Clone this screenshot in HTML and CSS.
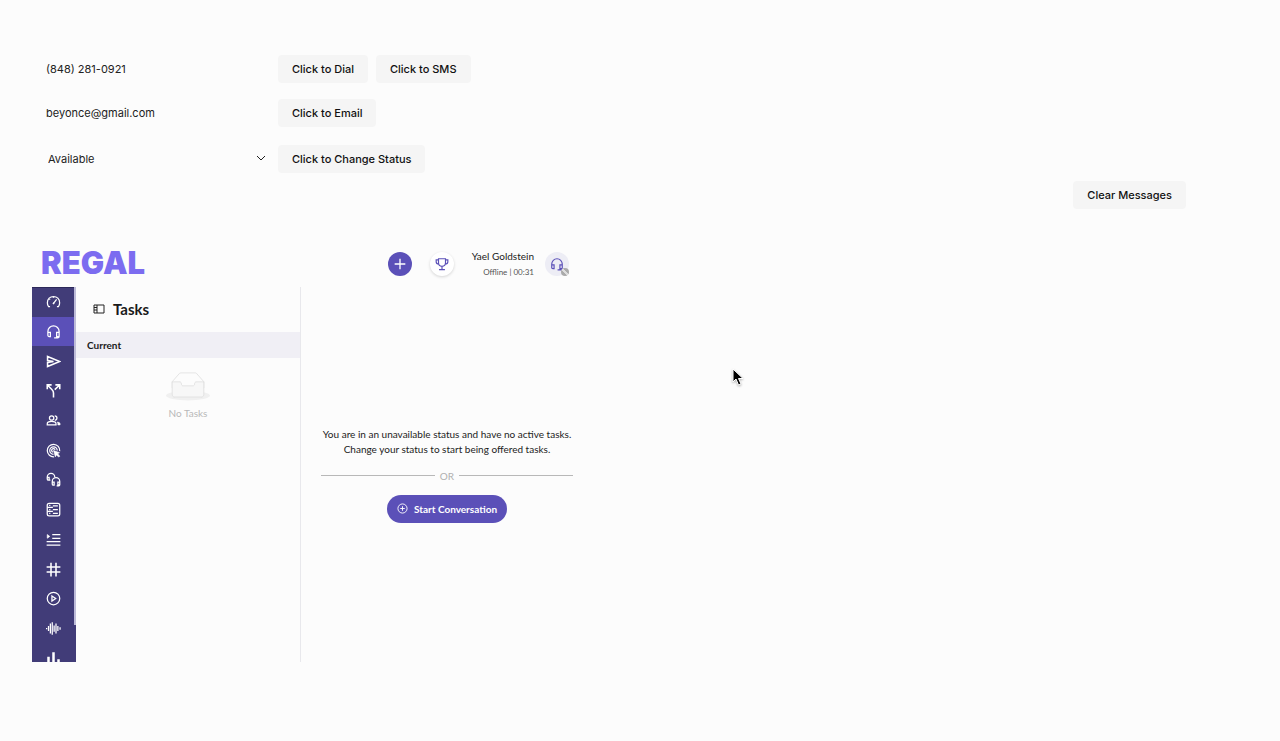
FILE: index.html
```html
<!DOCTYPE html>
<html lang="en">
<head>
  <meta charset="UTF-8" />
  <meta name="viewport" content="width=device-width, initial-scale=1.0"/>
  <title>Regal Phone</title>
  <link rel="stylesheet" href="styles.css">
</head>
<body>
  <main class="page">
    <form class="controls">
      <input class="field" type="tel" aria-label="Phone" value="(848) 281-0921">
      <div class="buttons">
        <button type="button" class="btn">Click to Dial</button>
        <button type="button" class="btn">Click to SMS</button>
      </div>

      <input class="field" type="email" aria-label="Email" value="beyonce@gmail.com">
      <div class="buttons">
        <button type="button" class="btn">Click to Email</button>
      </div>

      <div class="select-wrap">
        <select class="field select" aria-label="Status">
          <option>Available</option>
          <option>Offline</option>
        </select>
        <svg class="chevron" viewBox="0 0 10 6"><path d="M1 1l4 4 4-4"/></svg>
      </div>
      <div class="buttons">
        <button type="button" class="btn">Click to Change Status</button>
      </div>
    </form>

    <div class="clear-row">
      <button type="button" class="btn">Clear Messages</button>
    </div>

    <div class="columns">
      <section class="phone">
        <header class="phone-header">
          <div class="logo">REGAL</div>
          <button class="round add" aria-label="Add">
            <svg viewBox="0 0 24 24"><path d="M12 4v16M4 12h16"/></svg>
          </button>
          <button class="round trophy" aria-label="Leaderboard">
            <svg viewBox="0 0 24 24"><path d="M6 3h12v7c0 4-2.500 6-6 6s-6-2-6-6zM6 5H2v3c0 3 2 4 4.500 4M18 5h4v3c0 3-2 4-4.500 4M12 16v5M7 21.500h10"/></svg>
          </button>
          <div class="user">
            <div class="user-name">Yael Goldstein</div>
            <div class="user-status">Offline | 00:31</div>
          </div>
          <button class="round agent" aria-label="Agent status">
            <svg viewBox="0 0 24 24"><path d="M3 18v-6a9 9 0 0 1 18 0v8c0 1.500-1 2-2.500 2H13M3 13.500h4V20H5c-1.300 0-2-.7-2-2zM21 13.500h-4V20h4"/></svg>
            <span class="badge"></span>
          </button>
        </header>

        <div class="phone-body">
          <nav class="rail">
            <div class="rail-list">
              <a href="#" aria-label="Dashboard"><svg viewBox="0 0 24 24"><path d="M6.500 20H4a9.800 9.800 0 0 1-1.800-6C2.200 8 6.500 4 12 4s9.800 4 9.800 10a9.800 9.800 0 0 1-1.800 6h-2.500M12 15l5-6.500"/><circle cx="12" cy="15" r="1" class="solid"/><path d="M12 4v2M5.500 8l1 1"/></svg></a>
              <a href="#" class="active" aria-label="Tasks"><svg viewBox="0 0 24 24"><path d="M3 18v-6a9 9 0 0 1 18 0v8c0 1.500-1 2-2.500 2H13M3 13.500h4V20H5c-1.300 0-2-.7-2-2zM21 13.500h-4V20h4"/></svg></a>
              <a href="#" aria-label="Send"><svg viewBox="0 0 24 24"><path class="mid" d="M2.500 4L22 12 2.500 20v-6.500L12 12l-9.500-1.500z"/></svg></a>
              <a href="#" aria-label="Journeys"><svg viewBox="0 0 24 24"><path class="mid" d="M12 23v-7c0-3-1-4-3-6L3 4M2 10V3h7M14 10.500L21 4M15 3h7v7"/></svg></a>
              <a href="#" aria-label="Contacts"><svg viewBox="0 0 24 24"><circle cx="9" cy="8" r="3.500"/><path d="M2 19v-2c0-2 3.500-3.500 7-3.500s7 1.500 7 3.500v2zM14 4.500a3.500 3.500 0 0 1 0 7"/><path class="solid" d="M18 14.500c2.500.5 4.500 1.200 4.500 2.500v2H19v-2c0-1-.3-1.800-1-2.500z"/></svg></a>
              <a href="#" aria-label="Campaigns"><svg viewBox="0 0 24 24"><path d="M13 22A10 10 0 1 1 22 13M12 18A6 6 0 1 1 18 12M11 14.500A2.800 2.800 0 1 1 14.500 11"/><path class="solid" d="M12 12l9.500 3.500-3 1.500 3.500 4-1.500 1.500-4-3.500-1.500 3z"/></svg></a>
              <a href="#" aria-label="Agents"><svg viewBox="0 0 24 24"><path d="M7 13H4c-1.500 0-2-1-2-2V8a6 6 0 0 1 12 0M2 8.500h3V13M10 19v-4a6 6 0 0 1 12 0v5.500c0 1-.5 1.500-1.500 1.500H17M10 16h3v5h-1.500c-1 0-1.500-.5-1.500-2zM22 16h-3v4.500h3"/></svg></a>
              <a href="#" aria-label="Forms"><svg viewBox="0 0 24 24"><rect x="2" y="2" width="20" height="20" rx="3"/><path d="M2 8.500h9M2 15h9M11 6h8M11 12h8M11 18h8M5 5.500h2M5 12h2M5 18h2"/></svg></a>
              <a href="#" aria-label="Queues"><svg viewBox="0 0 24 24"><path d="M10 4h13M10 10h13M1 15.500h22M1 21h22"/><path class="solid" d="M2 4l4 3-4 3z"/></svg></a>
              <a href="#" aria-label="Numbers"><svg viewBox="0 0 24 24"><path class="mid" d="M8 1v22M16 1v22M1 8h22M1 16h22"/></svg></a>
              <a href="#" aria-label="Recordings"><svg viewBox="0 0 24 24"><circle cx="12" cy="12" r="10"/><path d="M9.500 8l6 4-6 4z"/></svg></a>
              <a href="#" aria-label="Voice"><svg viewBox="0 0 24 24"><path d="M1 11v2M4 8v8M7 4v16M10 2v20M13 7v10M16 4v16M19 8v8M22.500 10v4"/></svg></a>
              <a href="#" aria-label="Reports"><svg viewBox="0 0 24 24"><path class="bars" d="M4 9v14M12 2v21M20 13v10"/></svg></a>
            </div>
            <div class="scrollbar"><div class="thumb"></div></div>
          </nav>

          <aside class="tasks">
            <div class="tasks-title">
              <svg viewBox="0 0 12 10"><path d="M1 1h10v8H1zM4 1v8M1 3.500h3M1 6h3"/></svg>
              <h2>Tasks</h2>
            </div>
            <h3>Current</h3>
            <div class="empty">
              <svg viewBox="0 0 64 41">
                <ellipse cx="32" cy="33" rx="32" ry="7"/>
                <path class="box" d="M55 12.800L44.900 1.300C44.400.500 43.700 0 42.900 0H21.100c-.8 0-1.500.5-2 1.300L9 12.800V22h46z"/>
                <path class="tray" d="M41.600 15.900c0-1.600 1-2.900 2.200-2.900H55v18.100c0 2.200-1.300 3.900-3 3.900H12c-1.700 0-3-1.700-3-3.900V13h11.200c1.200 0 2.200 1.300 2.200 2.900 0 1.600 1 2.900 2.200 2.900h14.800c1.200 0 2.200-1.300 2.200-2.900z"/>
              </svg>
              <p>No Tasks</p>
            </div>
          </aside>

          <div class="content">
            <p>You are in an unavailable status and have no active tasks.<br>Change your status to start being offered tasks.</p>
            <div class="divider">OR</div>
            <button class="start">
              <svg viewBox="0 0 24 24"><circle cx="12" cy="12" r="10"/><path d="M12 7v10M7 12h10"/></svg>
              Start Conversation
            </button>
          </div>
        </div>
      </section>
      <section class="messages"></section>
    </div>
  </main>

  <svg class="cursor" viewBox="0 0 12 18"><path d="M1 1v13l3-3 2.500 6 2.500-1-2.500-5.500H11z"/></svg>
</body>
</html>
```
FILE: styles.css
```css
* {
  box-sizing: border-box;
}

body {
  margin: 0;
  background: #fcfcfc;
  color: #222;
  font-family: Inter, sans-serif;
  font-size: 11px;
}

button, input, select {
  font: inherit;
  color: inherit;
}

button {
  padding: 0;
  border: none;
  cursor: pointer;
}

svg {
  fill: none;
  stroke: currentColor;
}

.page {
  padding: 55px 94px 0 32px;
}

.controls {
  display: grid;
  grid-template-columns: 238px 1fr;
  gap: 16px 8px;
  align-items: center;
}

.field {
  width: 100%;
  height: 28px;
  padding: 0 14px;
  border: none;
  background: transparent;
}

.select-wrap {
  position: relative;
}

.select {
  display: block;
  height: 32px;
  padding: 0 16px;
  appearance: none;
}

.chevron {
  position: absolute;
  top: 12px;
  right: 4px;
  width: 10px;
  height: 6px;
  pointer-events: none;
}

.buttons {
  display: flex;
  gap: 8px;
}

.btn {
  height: 28px;
  padding: 0 14px;
  border-radius: 4px;
  background: #f5f5f5;
  color: #111;
  font-weight: 500;
}

.clear-row {
  display: flex;
  justify-content: flex-end;
  margin-top: 6px;
}

.columns {
  display: grid;
  grid-template-columns: 1fr 1fr;
  gap: 32px;
  margin-top: 30px;
}

.phone {
  font-family: Lato, sans-serif;
}

.phone-header {
  display: flex;
  align-items: center;
  height: 48px;
  padding: 2px 24px 0 9px;
}

.logo {
  margin-right: auto;
  padding-bottom: 4px;
  color: #7c6cf0;
  font-family: Inter, sans-serif;
  font-size: 31px;
  font-weight: 900;
}

.round {
  display: grid;
  place-items: center;
  position: relative;
  width: 24px;
  height: 24px;
  border-radius: 50%;
}

.round svg {
  width: 14px;
  height: 14px;
  stroke-width: 2;
}

.add {
  background: #5b50b8;
  color: #fff;
}

.add svg {
  width: 16px;
  height: 16px;
}

.trophy {
  margin-left: 18px;
  background: #fff;
  color: #5b50b8;
  box-shadow: 0 1px 3px rgba(0,0,0,0.16);
}

.user {
  margin: 0 11px 0 18px;
  text-align: right;
}

.user-name {
  font-size: 10px;
  line-height: 16px;
}

.user-status {
  color: #555;
  font-size: 8px;
  line-height: 16px;
}

.agent {
  background: #ededf5;
  color: #5b50b8;
}

.badge {
  position: absolute;
  right: 0;
  bottom: 0;
  width: 8px;
  height: 8px;
  border-radius: 50%;
  background: linear-gradient(45deg, #aaa 42%, #ddd 42%, #ddd 58%, #aaa 58%);
}

.phone-body {
  display: flex;
  height: 375px;
}

.rail {
  display: flex;
  width: 44px;
  overflow: hidden;
  background: #413c78;
}

.rail-list {
  display: flex;
  flex: 1;
  flex-direction: column;
  height: 386px;
  box-shadow: inset 0 1px #2c2859;
}

.rail a {
  display: grid;
  flex: 1;
  place-items: center;
  color: #fff;
}

.rail .active {
  background: #5b50b8;
}

.rail svg {
  width: 15px;
  height: 15px;
  stroke-width: 2;
}

.rail .mid {
  stroke-width: 2.5;
}

.rail .bars {
  stroke-width: 4;
}

.rail .solid {
  fill: currentColor;
  stroke-width: 1;
}

.scrollbar {
  width: 2px;
}

.thumb {
  height: 90%;
  background: #bdbbd8;
}

.tasks {
  width: 225px;
  border-right: 1px solid #e8e8ec;
}

.tasks-title {
  display: flex;
  align-items: center;
  gap: 8px;
  height: 45px;
  padding: 0 0 2px 17px;
}

.tasks-title svg {
  width: 12px;
  height: 10px;
}

.tasks h2 {
  margin: 0;
  color: #1a1a1a;
  font-size: 15px;
}

.tasks h3 {
  margin: 0;
  padding-left: 11px;
  background: #f0eff5;
  color: #1a1a1a;
  font-size: 10px;
  line-height: 26px;
}

.empty {
  margin-top: 14px;
  color: #b8b8b8;
  text-align: center;
}

.empty svg {
  width: 44px;
  height: 30px;
  stroke: #d9d9d9;
}

.empty ellipse {
  fill: #f0f0f0;
  stroke: none;
}

.empty .box {
  fill: #fcfcfc;
}

.empty .tray {
  fill: #f7f7f7;
}

.empty p {
  margin: 1px 0 0;
  font-size: 10px;
  line-height: 16px;
}

.content {
  display: flex;
  flex: 1;
  flex-direction: column;
  align-items: center;
  justify-content: center;
  padding: 0 20px;
}

.content p {
  margin: 0;
  font-size: 10px;
  line-height: 15px;
  text-align: center;
  white-space: nowrap;
}

.divider {
  display: flex;
  align-items: center;
  gap: 5px;
  width: 100%;
  margin: 12px 0;
  color: #b0b0b0;
  font-size: 10px;
  line-height: 14px;
}

.divider::before,
.divider::after {
  flex: 1;
  height: 1px;
  background: #b8b8b8;
  content: "";
}

.start {
  display: flex;
  align-items: center;
  gap: 6px;
  height: 28px;
  padding: 0 10px;
  border-radius: 14px;
  background: #5b50b8;
  color: #fff;
  font-size: 10px;
  font-weight: 700;
}

.start svg {
  width: 11px;
  height: 11px;
  stroke-width: 2;
}

.cursor {
  position: absolute;
  top: 368px;
  left: 732px;
  width: 12px;
  height: 18px;
  fill: #000;
  stroke: #fff;
  filter: drop-shadow(0 1px 1px rgba(0,0,0,0.3));
  pointer-events: none;
}
```
